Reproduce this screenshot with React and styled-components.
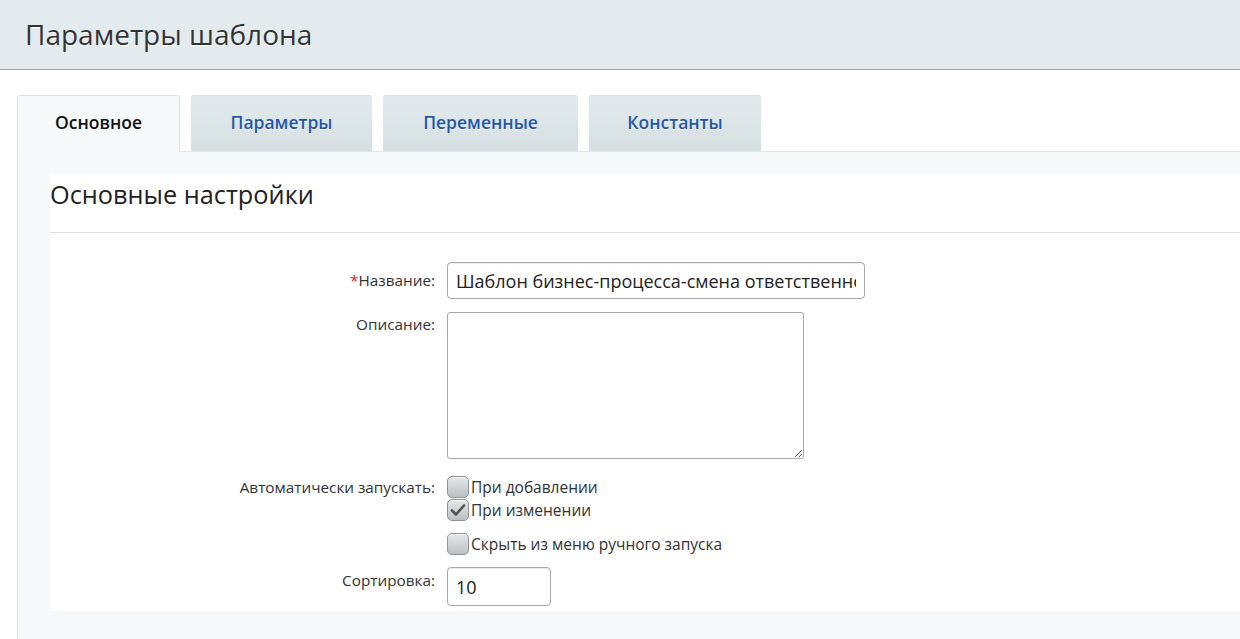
import React from 'react';
import styled, { createGlobalStyle } from 'styled-components';

const GlobalStyle = createGlobalStyle`
  html, body {
    margin: 0;
    padding: 0;
    background: #ffffff;
    font-family: "Open Sans", "Noto Sans", sans-serif;
    color: #333333;
    overflow: hidden;
  }
`

const Page = styled.div`
  width: 1240px;
  height: 639px;
  display: flex;
  flex-direction: column;
  overflow: hidden;
`

const Header = styled.div`
  height: 69px;
  flex-shrink: 0;
  background: #e4ebee;
  border-bottom: 1px solid #a3a8ab;
  display: flex;
  align-items: center;
  padding-left: 25px;
`

const HeaderTitle = styled.h1`
  margin: 0 0 1px;
  font-size: 28px;
  font-weight: 400;
  color: #333;
  text-shadow: 0 1px 0 #ffffff;
`

const Body = styled.div`
  flex: 1;
  display: flex;
  flex-direction: column;
  padding: 25px 0 0 17px;
`

const TabBar = styled.div`
  display: flex;
  gap: 11px;
  height: 57px;
  position: relative;
  z-index: 1;
`

const Tab = styled.div`
  width: ${p => p.$w}px;
  height: 57px;
  box-sizing: border-box;
  display: flex;
  align-items: center;
  justify-content: center;
  padding-bottom: 3px;
  font-size: 17.5px;
  font-weight: 600;
  border-radius: 3px 3px 0 0;
  color: ${p => (p.$active ? '#111' : '#2256a4')};
  background: ${p => (p.$active ? '#f5f9f9' : 'linear-gradient(to bottom, #e3eaed, #d5e0e3)')};
  border: 1px solid ${p => (p.$active ? '#d9e4ea' : 'transparent')};
  border-bottom: ${p => (p.$active ? '1px solid #f5f9f9' : '1px solid #e1e8eb')};
  text-shadow: ${p => (p.$active ? 'none' : '0 1px 0 #ffffff')};
`

const Panel = styled.div`
  flex: 1;
  margin-top: -1px;
  background: #f5f9f9;
  border-left: 1px solid #e0e8ec;
  border-top: 1px solid #dee6ea;
  padding: 22px 0 0 32px;
`

const Card = styled.div`
  background: #ffffff;
`

const CardTitle = styled.div`
  height: 59px;
  box-sizing: border-box;
  border-bottom: 1px solid #e0e0e0;
  padding-top: 3px;
  font-size: 25.3px;
  line-height: 34px;
  font-weight: 400;
  color: #222;
`

const Form = styled.div`
  display: grid;
  grid-template-columns: 385px 1fr;
  column-gap: 12px;
  row-gap: 13px;
  padding: 29px 0 5px;
`

const Label = styled.div`
  text-align: right;
  font-size: 15.3px;
  color: #333;
  padding-top: ${p => p.$top || 0}px;
  line-height: 20px;
`

const Required = styled.span`
  color: #e02020;
`

const TextInput = styled.input`
  box-sizing: border-box;
  width: ${p => p.$w}px;
  height: ${p => p.$h}px;
  margin: 0;
  border: 1px solid #a9a9a9;
  border-radius: 4px;
  background: #fff;
  font-family: inherit;
  font-size: 18px;
  color: #222;
  padding: 0 8px;
  outline: none;
  box-shadow: inset 0 1px 1px rgba(0,0,0,0.08);
`

const TextArea = styled.textarea`
  box-sizing: border-box;
  display: block;
  width: 357px;
  height: 147px;
  margin: 0;
  border: 1px solid #a9a9a9;
  border-radius: 3px;
  background: #fff;
  resize: both;
  outline: none;
  font-family: inherit;
`

const Checks = styled.div`
  display: flex;
  flex-direction: column;
  padding-top: 3px;
  margin-bottom: -1px;
`

const CheckRow = styled.label`
  display: flex;
  align-items: center;
  height: 23px;
  font-size: 15.5px;
  color: #333;
  margin-top: ${p => p.$gap || 0}px;
`

const Box = styled.span`
  width: 20px;
  height: 20px;
  border: 1px solid #8e9396;
  border-radius: 5px;
  background: linear-gradient(to bottom, #e6e8e9, #bcc0c3);
  box-shadow: inset 0 1px 0 rgba(255,255,255,0.7);
  display: inline-flex;
  align-items: center;
  justify-content: center;
  flex-shrink: 0;
  margin-right: 2px;
`

const Check = ({ checked, children, gap }) => (
  <CheckRow $gap={gap}>
    <Box>
      {checked && (
        <svg width="16" height="14" viewBox="0 0 16 14">
          <path d="M2 7.5 L6 11.5 L14 2.5" fill="none" stroke="#505558" strokeWidth="2.6" strokeLinecap="round" strokeLinejoin="round" />
        </svg>
      )}
    </Box>
    {children}
  </CheckRow>
)

const tabs = [
  { title: 'Основное', w: 163, active: true },
  { title: 'Параметры', w: 181 },
  { title: 'Переменные', w: 195 },
  { title: 'Константы', w: 172 },
]

export default function App () {
  return (
    <Page>
      <GlobalStyle />
      <Header>
        <HeaderTitle>Параметры шаблона</HeaderTitle>
      </Header>
      <Body>
        <TabBar>
          {tabs.map(t => <Tab key={t.title} $active={t.active} $w={t.w}>{t.title}</Tab>)}
        </TabBar>
        <Panel>
          <Card>
            <CardTitle>Основные настройки</CardTitle>
            <Form>
              <Label $top={8}><Required>*</Required>Название:</Label>
              <TextInput $w={418} $h={37} readOnly value="Шаблон бизнес-процесса-смена ответственного" />

              <Label $top={2}>Описание:</Label>
              <TextArea readOnly />

              <Label $top={5}>Автоматически запускать:</Label>
              <Checks>
                <Check>При добавлении</Check>
                <Check checked>При изменении</Check>
                <Check gap={11}>Скрыть из меню ручного запуска</Check>
              </Checks>

              <Label $top={3}>Сортировка:</Label>
              <TextInput $w={104} $h={39} readOnly value="10" />
            </Form>
          </Card>
        </Panel>
      </Body>
    </Page>
  )
}
